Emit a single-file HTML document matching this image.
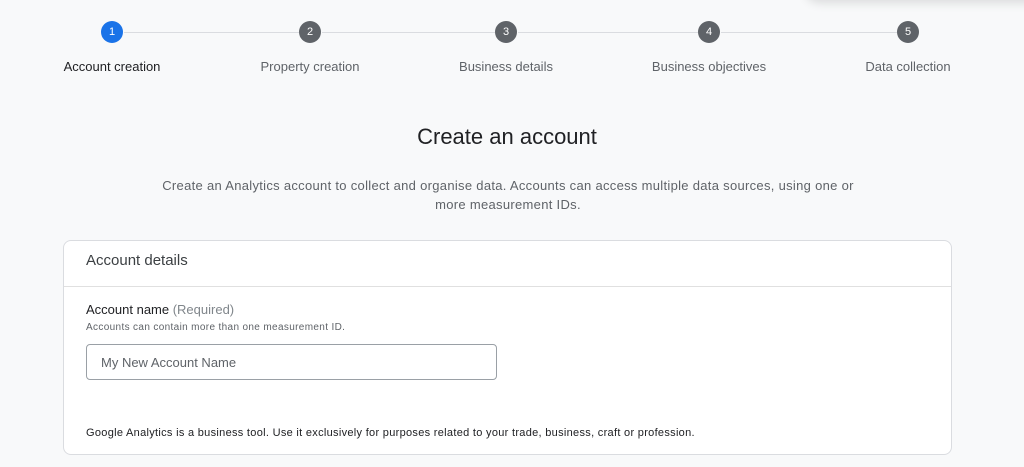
<!DOCTYPE html>
<html><head><style>
*{margin:0;padding:0;box-sizing:border-box}
body{width:1024px;height:467px;background:#f8f9fa;font-family:"Liberation Sans",Arial,sans-serif;position:relative;overflow:hidden;color:#3c4043}
.a{position:absolute}
.c{position:absolute;width:22px;height:22px;border-radius:50%;background:#5f6368;color:#fff;font-size:11px;line-height:22px;text-align:center;top:21px}
.l{position:absolute;top:59px;font-size:13px;color:#5f6368;transform:translateX(-50%);white-space:nowrap}
.line{position:absolute;top:32px;height:1px;background:#dadce0}
</style></head><body>
<div class="a" style="left:805px;top:-30px;width:260px;height:30px;border-radius:14px;background:#eeeff0;box-shadow:0 3px 10px rgba(0,0,0,.12)"></div>
<div class="line" style="left:124px;width:175px"></div>
<div class="line" style="left:322px;width:173px"></div>
<div class="line" style="left:518px;width:180px"></div>
<div class="line" style="left:721px;width:176px"></div>
<div class="c" style="left:101px;background:#1a73e8">1</div>
<div class="c" style="left:299px">2</div>
<div class="c" style="left:495px">3</div>
<div class="c" style="left:698px">4</div>
<div class="c" style="left:897px">5</div>
<div class="l" style="left:112px;color:#202124">Account creation</div>
<div class="l" style="left:310px">Property creation</div>
<div class="l" style="left:506px">Business details</div>
<div class="l" style="left:709px">Business objectives</div>
<div class="l" style="left:908px">Data collection</div>
<div class="a" style="left:0;width:1014px;top:124px;text-align:center;font-size:22px;color:#202124">Create an account</div>
<div class="a" style="left:155px;width:706px;top:176px;text-align:center;font-size:13px;line-height:19px;letter-spacing:0.3px;color:#5f6368">Create an Analytics account to collect and organise data. Accounts can access multiple data sources, using one or more measurement IDs.</div>
<div class="a" style="left:63px;top:240px;width:889px;height:215px;background:#fff;border:1px solid #dadce0;border-radius:8px">
<div class="a" style="left:22px;top:11px;font-size:15px;color:#3c4043">Account details</div>
<div class="a" style="left:0;top:45px;width:887px;height:1px;background:#e0e0e0"></div>
<div class="a" style="left:22px;top:61px;font-size:13px;color:#202124">Account name <span style="color:#80868b">(Required)</span></div>
<div class="a" style="left:22px;top:81px;font-size:10px;letter-spacing:0.35px;color:#5f6368">Accounts can contain more than one measurement ID.</div>
<div class="a" style="left:22px;top:103px;width:411px;height:36px;border:1px solid #9aa0a6;border-radius:4px;font-size:13px;color:#5f6368;padding:10px 0 0 14px">My New Account Name</div>
<div class="a" style="left:22px;top:186px;font-size:11px;letter-spacing:0.3px;color:#202124">Google Analytics is a business tool. Use it exclusively for purposes related to your trade, business, craft or profession.</div>
</div>
</body></html>
